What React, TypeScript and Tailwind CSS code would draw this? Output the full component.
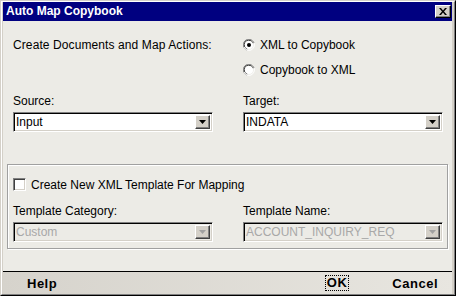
import React from 'react'

const font = { fontFamily: '"Liberation Sans", Arial, sans-serif' }

function Combo({ value, disabled }: { value: string; disabled?: boolean }) {
    return (
        <div className={"flex items-center h-[20px] w-[200px] border border-t-[#808080] border-l-[#808080] border-b-white border-r-white shadow-[inset_1px_1px_0_#000,inset_-1px_-1px_0_#D4D0C8] " + (disabled ? "bg-[#ECEBE6]" : "bg-white")}>
            <span className={"flex-1 pl-[2px] text-[12px] leading-[14px] " + (disabled ? "text-[#A8A8A8]" : "text-black")}>{value}</span>
            <div className="mr-[2px] w-[15px] h-[14px] bg-[#D4D0C8] flex items-center justify-center border border-t-white border-l-white border-b-[#404040] border-r-[#404040] shadow-[inset_-1px_-1px_0_#808080]">
                <svg width="7" height="4" viewBox="0 0 7 4">
                    <path d="M0 0h7L3.5 4z" fill={disabled ? "#A0A0A0" : "#000"} />
                </svg>
            </div>
        </div>
    )
}

function Radio({ label, checked }: { label: string; checked?: boolean }) {
    return (
        <div className="flex items-center h-[14px]">
            <svg width="12" height="12" viewBox="0 0 12 12">
                <path d="M11 4A5.5 5.5 0 1 0 4 11" stroke="#808080" fill="none" />
                <path d="M10 4.5A4.5 4.5 0 1 0 4.5 10" stroke="#404040" fill="none" />
                <circle cx="6" cy="6" r="4" fill="#fff" />
                <path d="M1 8A5.5 5.5 0 0 0 8 11A5.5 5.5 0 0 0 11 4" stroke="#fff" fill="none" />
                {checked && <circle cx="6" cy="6" r="2" fill="#000" />}
            </svg>
            <span className="ml-[5px] text-[12px] leading-[14px] text-black">{label}</span>
        </div>
    )
}

export default function App() {
    return (
        <div style={font} className="w-[456px] h-[296px] flex flex-col bg-[#D4D0C8] border border-t-[#D4D0C8] border-l-[#D4D0C8] border-b-black border-r-black">
            <div className="flex flex-col flex-1 border border-t-white border-l-white border-b-[#808080] border-r-[#808080] pl-[1px] pr-[2px]">
                {/* title bar */}
                <div className="h-[19px] bg-[#000080] flex items-center justify-between pl-[3px] pr-[1px]">
                    <span className="text-white font-bold text-[12px] leading-[15px]">Auto Map Copybook</span>
                    <div className="w-[16px] h-[13px] bg-[#D4D0C8] flex items-center justify-center border border-t-white border-l-white border-b-black border-r-black shadow-[inset_-1px_-1px_0_#808080]">
                        <svg width="8" height="7" viewBox="0 0 8 7">
                            <path d="M0 0h2l2 2.5L6 0h2L5 3.5 8 7H6L4 4.5 2 7H0l3-3.5z" fill="#000" />
                        </svg>
                    </div>
                </div>

                {/* body */}
                <div className="flex-1 bg-[#ECEBE6] flex flex-col">
                    <div className="flex pl-[10px] pt-[17px] gap-[30px]">
                        <div className="w-[200px] flex flex-col">
                            <span className="text-[12px] leading-[14px] text-black tracking-[0.1px]">Create Documents and Map Actions:</span>
                            <span className="mt-[42px] text-[12px] leading-[14px] text-black">Source:</span>
                            <div className="mt-[4px]"><Combo value="Input" /></div>
                        </div>
                        <div className="w-[200px] flex flex-col">
                            <Radio label="XML to Copybook" checked />
                            <div className="mt-[11px]"><Radio label="Copybook to XML" /></div>
                            <span className="mt-[17px] text-[12px] leading-[14px] text-black">Target:</span>
                            <div className="mt-[4px]"><Combo value="INDATA" /></div>
                        </div>
                    </div>

                    {/* group box */}
                    <div className="mx-[4px] mt-[32px] border border-[#A0A0A0] shadow-[1px_1px_0_#fff,inset_1px_1px_0_#fff] pl-[5px] pt-[13px] pb-[6px]">
                        <div className="flex items-center h-[13px]">
                            <div className="w-[13px] h-[13px] bg-white border border-t-[#808080] border-l-[#808080] border-b-white border-r-white shadow-[inset_1px_1px_0_#404040,inset_-1px_-1px_0_#D4D0C8]" />
                            <span className="ml-[5px] text-[12px] leading-[14px] text-black">Create New XML Template For Mapping</span>
                        </div>
                        <div className="flex gap-[30px] mt-[13px]">
                            <div className="w-[200px] flex flex-col">
                                <span className="text-[12px] leading-[14px] text-black">Template Category:</span>
                                <div className="mt-[4px]"><Combo value="Custom" disabled /></div>
                            </div>
                            <div className="w-[200px] flex flex-col">
                                <span className="text-[12px] leading-[14px] text-black">Template Name:</span>
                                <div className="mt-[4px]"><Combo value="ACCOUNT_INQUIRY_REQ" disabled /></div>
                            </div>
                        </div>
                    </div>
                    <div className="flex-1" />

                    {/* button bar */}
                    <div className="h-[23px] border-t border-black bg-gradient-to-r from-[#D6D3CC] to-[#E8E6E0] flex items-center">
                        <span className="ml-[24px] font-bold text-[13px] leading-[15px] text-black tracking-[0.5px]">Help</span>
                        <div className="flex-1" />
                        <span className="px-[1px] border border-dotted border-black font-bold text-[13px] leading-[14px] text-black tracking-[0.5px]">OK</span>
                        <span className="ml-[43px] mr-[14px] font-bold text-[13px] leading-[15px] text-black tracking-[0.5px]">Cancel</span>
                    </div>
                </div>
            </div>
        </div>
    )
}
